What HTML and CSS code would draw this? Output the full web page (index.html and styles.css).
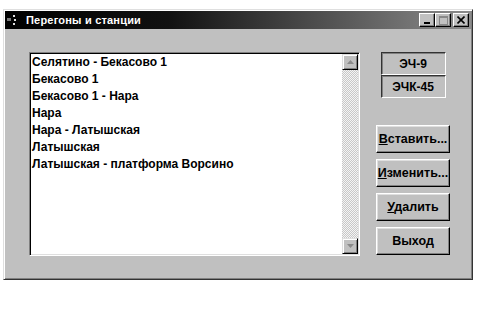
FILE: index.html
```html
<!DOCTYPE html>
<html lang="ru">
<head>
    <meta charset="UTF-8">
    <title>Перегоны и станции</title>
    <link rel="stylesheet" href="styles.css">
</head>
<body>
    <div class="window">
        <div class="titlebar">
            <svg class="app-icon" width="10" height="12" viewBox="0 0 10 12">
                <rect x="0" y="4" width="4" height="3" fill="#777"/>
                <rect x="6" y="1" width="2" height="2" fill="#ddd"/>
                <rect x="7" y="5" width="2" height="2" fill="#ddd"/>
                <rect x="6" y="9" width="2" height="2" fill="#ddd"/>
            </svg>
            <span class="title">Перегоны и станции</span>
            <div class="controls">
                <button class="ctl">
                    <svg width="8" height="8" viewBox="0 0 8 8"><rect x="1" y="6" width="6" height="2" fill="#000"/></svg>
                </button>
                <button class="ctl">
                    <svg width="9" height="9" viewBox="0 0 9 9"><rect x="0.5" y="0.5" width="8" height="8" fill="none" stroke="#888"/><rect x="0" y="0" width="9" height="2" fill="#888"/></svg>
                </button>
                <button class="ctl close">
                    <svg width="8" height="8" viewBox="0 0 8 8"><path d="M0.5 0.5 L7.5 7.5 M7.5 0.5 L0.5 7.5" stroke="#000" stroke-width="1.6"/></svg>
                </button>
            </div>
        </div>

        <div class="content">
            <div class="listbox">
                <ul class="items">
                    <li>Селятино - Бекасово 1</li>
                    <li>Бекасово 1</li>
                    <li>Бекасово 1 - Нара</li>
                    <li>Нара</li>
                    <li>Нара - Латышская</li>
                    <li>Латышская</li>
                    <li>Латышская - платформа Ворсино</li>
                </ul>
                <div class="scrollbar">
                    <div class="arrow">
                        <svg width="7" height="4" viewBox="0 0 7 4"><path d="M3.5 0 L7 4 L0 4 Z" fill="#8a8a8a"/></svg>
                    </div>
                    <div class="track"></div>
                    <div class="arrow">
                        <svg width="7" height="4" viewBox="0 0 7 4"><path d="M0 0 L7 0 L3.5 4 Z" fill="#8a8a8a"/></svg>
                    </div>
                </div>
            </div>

            <div class="side">
                <div class="status">
                    <div class="status-cell">ЭЧ-9</div>
                    <div class="status-cell">ЭЧК-45</div>
                </div>
                <div class="buttons">
                    <button class="btn"><u>В</u>ставить...</button>
                    <button class="btn"><u>И</u>зменить...</button>
                    <button class="btn"><u>У</u>далить</button>
                    <button class="btn">Выход</button>
                </div>
            </div>
        </div>
    </div>
</body>
</html>
```

FILE: styles.css
```css
html, body {
    margin: 0;
    background: #fff;
    font-family: "Liberation Sans", Arial, sans-serif;
    font-size: 12px;
    font-weight: bold;
    color: #000;
}
body {
    padding: 9px 0 0 3px;
}
.window {
    width: 470px;
    height: 271px;
    box-sizing: border-box;
    padding: 1px;
    background: #c0c0c0;
    border: 1px solid;
    border-color: #dfdfdf #333 #333 #dfdfdf;
    box-shadow: inset 1px 1px #fff, inset -1px -1px #808080;
    display: flex;
    flex-direction: column;
}
.titlebar {
    height: 18px;
    display: flex;
    align-items: center;
    padding: 0 2px 0 2px;
    background: linear-gradient(90deg, #000 0%, #111 35%, #8c8c8c 100%);
    color: #fff;
}
.app-icon {
    margin-right: 9px;
}
.title {
    font-size: 11px;
    letter-spacing: 0.2px;
}
.controls {
    margin-left: auto;
    display: flex;
}
.ctl {
    width: 16px;
    height: 14px;
    padding: 0;
    background: #c0c0c0;
    border: 1px solid;
    border-color: #fff #000 #000 #fff;
    box-shadow: inset -1px -1px #808080;
    display: flex;
    align-items: center;
    justify-content: center;
}
.ctl.close {
    margin-left: 2px;
}
.content {
    flex: 1;
    display: flex;
    gap: 16px;
    padding: 23px 21px 0 24px;
}
.listbox {
    width: 331px;
    height: 204px;
    box-sizing: border-box;
    background: #fff;
    border: 1px solid;
    border-color: #808080 #fff #fff #808080;
    box-shadow: inset 1px 1px #000, inset -1px -1px #dfdfdf;
    padding: 1px;
    display: flex;
}
.items {
    flex: 1;
    margin: 0;
    padding: 0 0 0 1px;
    list-style: none;
    font-size: 12px;
    line-height: 17px;
}
.scrollbar {
    width: 16px;
    display: flex;
    flex-direction: column;
}
.arrow {
    height: 16px;
    box-sizing: border-box;
    background: #c0c0c0;
    border: 1px solid;
    border-color: #dfdfdf #000 #000 #dfdfdf;
    box-shadow: inset 1px 1px #fff, inset -1px -1px #808080;
    display: flex;
    align-items: center;
    justify-content: center;
}
.track {
    flex: 1;
    background-image: repeating-conic-gradient(#c8c8c8 0 25%, #f4f4f4 0 50%);
    background-size: 2px 2px;
}
.side {
    width: 74px;
    display: flex;
    flex-direction: column;
    align-items: center;
}
.status {
    width: 65px;
    display: flex;
    flex-direction: column;
}
.status-cell {
    height: 23px;
    box-sizing: border-box;
    display: flex;
    align-items: center;
    justify-content: center;
    border: 1px solid;
    border-color: #333 #fff #fff #333;
    box-shadow: inset 1px 1px #808080;
    font-size: 12px;
}
.buttons {
    margin-top: 27px;
    display: flex;
    flex-direction: column;
    gap: 6px;
}
.btn {
    width: 74px;
    height: 28px;
    padding: 0;
    font-family: inherit;
    font-weight: bold;
    font-size: 12.5px;
    color: #000;
    background: #c0c0c0;
    border: 1px solid;
    border-color: #fff #000 #000 #fff;
    box-shadow: inset -1px -1px #808080, inset 1px 1px #dfdfdf;
}
```
